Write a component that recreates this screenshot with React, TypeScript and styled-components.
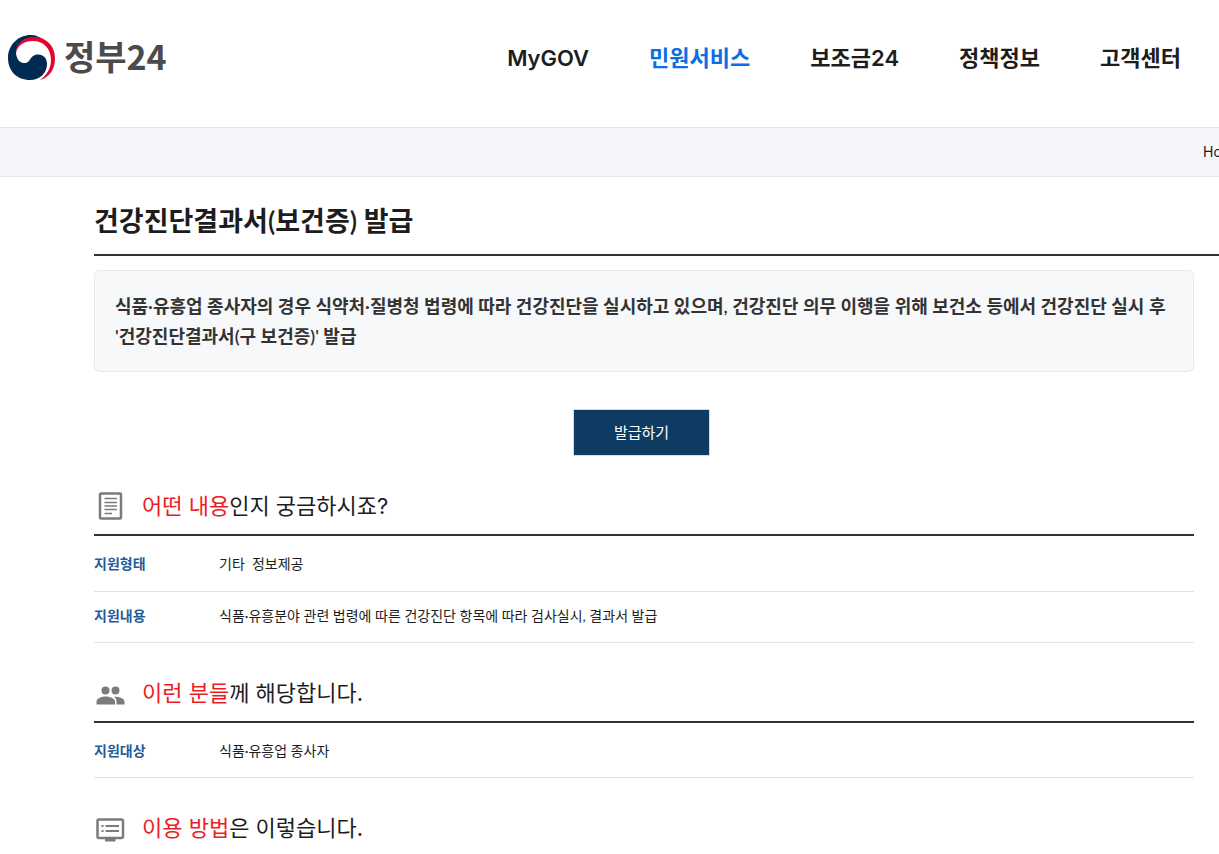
import React from "react";
import styled, { createGlobalStyle } from "styled-components";

const GlobalStyle = createGlobalStyle`
  *, *::before, *::after { box-sizing: border-box; }
  body {
    margin: 0;
    background: #fff;
    color: #1d1d1d;
    font-family: Lato, "Noto Sans CJK KR", sans-serif;
    font-size: 14px;
    line-height: 20px;
  }
  a { color: inherit; text-decoration: none; }
`;

const Header = styled.header`
  display: flex;
  justify-content: space-between;
  height: 128px;
  padding: 34px 38px 0 8px;
  border-bottom: 1px solid #e1e4e9;
`;

const Logo = styled.a`
  display: flex;
  align-items: flex-start;
  gap: 8px;
  height: 48px;
  color: #4b4b4d;
  font-family: "Noto Sans CJK KR", sans-serif;
  font-size: 34px;
  font-weight: 700;
  line-height: 44px;
`;

const Menu = styled.nav`
  display: flex;
  align-items: center;
  gap: 60px;
  height: 48px;
`;

const MenuLink = styled.a<{ $active?: boolean }>`
  color: ${(p) => (p.$active ? "#0a6ee6" : "#1d1d1d")};
  font-family: Inter, "Noto Sans CJK KR", sans-serif;
  font-size: 22px;
  font-weight: 600;
  line-height: 32px;
  white-space: nowrap;
`;

const Breadcrumb = styled.nav`
  display: flex;
  justify-content: flex-end;
  align-items: center;
  height: 49px;
  background: #f5f6fa;
  border-bottom: 1px solid #e4e7ec;
`;

const Crumb = styled.a`
  flex: 0 0 16px;
  overflow: hidden;
  font-family: Inter, "Noto Sans CJK KR", sans-serif;
  white-space: nowrap;
`;

const Main = styled.main`
  padding-left: 94px;
`;

const Title = styled.h1`
  margin: 0;
  padding: 24px 0 13px;
  border-bottom: 2px solid #333135;
  font-size: 27px;
  font-weight: 600;
  line-height: 40px;
`;

const Content = styled.div`
  padding: 14px 25px 0 0;
`;

const Summary = styled.p`
  margin: 0;
  padding: 20px 20px;
  border: 1px solid #e6e8ed;
  border-radius: 6px;
  background: #f7f8fa;
  color: #333;
  font-size: 18px;
  font-weight: 600;
  line-height: 30px;
`;

const Actions = styled.div`
  display: flex;
  justify-content: center;
  padding: 37px 5px 0 0;
`;

const IssueButton = styled.button`
  width: 137px;
  height: 47px;
  padding: 0 0 2px;
  border: 1px solid #d9dcdf;
  background: #0f3a61;
  color: #fff;
  font: inherit;
  font-size: 15px;
`;

const Section = styled.section`
  padding-top: 30px;
`;

const Heading = styled.h2<{ $ruled?: boolean }>`
  display: flex;
  align-items: center;
  gap: 15px;
  margin: 0;
  padding-bottom: ${(p) => (p.$ruled ? "8px" : "0")};
  border-bottom: ${(p) => (p.$ruled ? "2px solid #333135" : "0")};
  font-family: Inter, "Noto Sans CJK KR", sans-serif;
  font-size: 22px;
  font-weight: 400;
  line-height: 40px;

  svg { flex: none; margin-left: 1px; }
`;

const Accent = styled.em`
  color: #ed1c24;
  font-style: normal;
`;

const Table = styled.table`
  width: 100%;
  margin-top: 4px;
  border-collapse: collapse;

  tr { border-bottom: 1px solid #e1e1e1; }
  th, td { height: 51px; padding: 0 0 2px; text-align: left; white-space: pre-wrap; }
  th { width: 125px; color: #1f5c99; font-weight: 700; }
`;

const Emblem = () => (
  <svg width="48" height="48" viewBox="0 0 48 48" aria-hidden="true">
    <path fill="#022b52" d="M36 6C32 3 28 1 23 1C10 1 0 11 0 24C0 37 9 46 22 46C32 46 39 39 39 30C39 24 35 20.500 30.500 20.500C26 20.500 24 22.500 22 25.500C20 28.500 18 29.500 15 29C11 28 8 24 8 18C9 9 17 3 27 3.500C30 3.700 33 4.500 36 6Z" />
    <path fill="#e4032e" d="M8 19C8 10 16 3 26 3C38 3 47 12 47 24C47 35 42 43 32 46C39 41 43 34 43 26C43 14 35 7 25 7C16 7 10 11 8 19Z" />
  </svg>
);

const DocumentIcon = () => (
  <svg width="32" height="32" viewBox="0 0 32 32" fill="none" stroke="#7b7b7b" aria-hidden="true">
    <rect x="5" y="3.500" width="21" height="25" rx="1" strokeWidth="2.500" />
    <path strokeWidth="1.700" d="M9.500 8.500H22M9.500 12.500H22M9.500 16H22M9.500 19.500H22M9.500 23.500H17" />
  </svg>
);

const PeopleIcon = () => (
  <svg width="32" height="32" viewBox="0 0 32 32" fill="#7b7b7b" aria-hidden="true">
    <circle cx="10.500" cy="13.500" r="4" />
    <circle cx="20.500" cy="13.500" r="4" />
    <path d="M1.500 27.500V24.500C1.500 21 7 19.500 10.500 19.500S20 21 20 24.500V27.500ZM21.500 27.500V24.500C21.500 22.500 20.500 21 19 19.800C23 19.300 29.500 21 29.500 24.500V27.500Z" />
  </svg>
);

const GuideIcon = () => (
  <svg width="32" height="32" viewBox="0 0 32 32" fill="none" stroke="#7b7b7b" aria-hidden="true">
    <rect x="2.500" y="7.500" width="25.500" height="18.500" rx="1.500" strokeWidth="2.500" />
    <path strokeWidth="2" d="M6.500 14H8.500M10.500 14H24M6.500 19H8.500M10.500 19H24" />
    <path strokeWidth="3" d="M10 28H20.500" />
  </svg>
);

const MENU = ["MyGOV", "민원서비스", "보조금24", "정책정보", "고객센터"];

const InfoTable = ({ rows }: { rows: [string, string][] }) => (
  <Table>
    <tbody>
      {rows.map(([label, value]) => (
        <tr key={label}>
          <th scope="row">{label}</th>
          <td>{value}</td>
        </tr>
      ))}
    </tbody>
  </Table>
);

export default function App() {
  return (
    <>
      <GlobalStyle />
      <Header>
        <Logo href="#">
          <Emblem />
          정부24
        </Logo>
        <Menu>
          {MENU.map((item) => (
            <MenuLink key={item} href="#" $active={item === "민원서비스"}>
              {item}
            </MenuLink>
          ))}
        </Menu>
      </Header>
      <Breadcrumb>
        <Crumb href="#">Home</Crumb>
      </Breadcrumb>
      <Main>
        <Title>건강진단결과서(보건증) 발급</Title>
        <Content>
          <Summary>
            식품·유흥업 종사자의 경우 식약처·질병청 법령에 따라 건강진단을 실시하고 있으며, 건강진단 의무 이행을 위해 보건소 등에서 건강진단 실시 후
            <br />
            '건강진단결과서(구 보건증)' 발급
          </Summary>
          <Actions>
            <IssueButton type="button">발급하기</IssueButton>
          </Actions>
          <Section>
            <Heading $ruled>
              <DocumentIcon />
              <span><Accent>어떤 내용</Accent>인지 궁금하시죠?</span>
            </Heading>
            <InfoTable
              rows={[
                ["지원형태", "기타  정보제공"],
                ["지원내용", "식품·유흥분야 관련 법령에 따른 건강진단 항목에 따라 검사실시, 결과서 발급"],
              ]}
            />
          </Section>
          <Section>
            <Heading $ruled>
              <PeopleIcon />
              <span><Accent>이런 분들</Accent>께 해당합니다.</span>
            </Heading>
            <InfoTable rows={[["지원대상", "식품·유흥업 종사자"]]} />
          </Section>
          <Section>
            <Heading>
              <GuideIcon />
              <span><Accent>이용 방법</Accent>은 이렇습니다.</span>
            </Heading>
          </Section>
        </Content>
      </Main>
    </>
  );
}
